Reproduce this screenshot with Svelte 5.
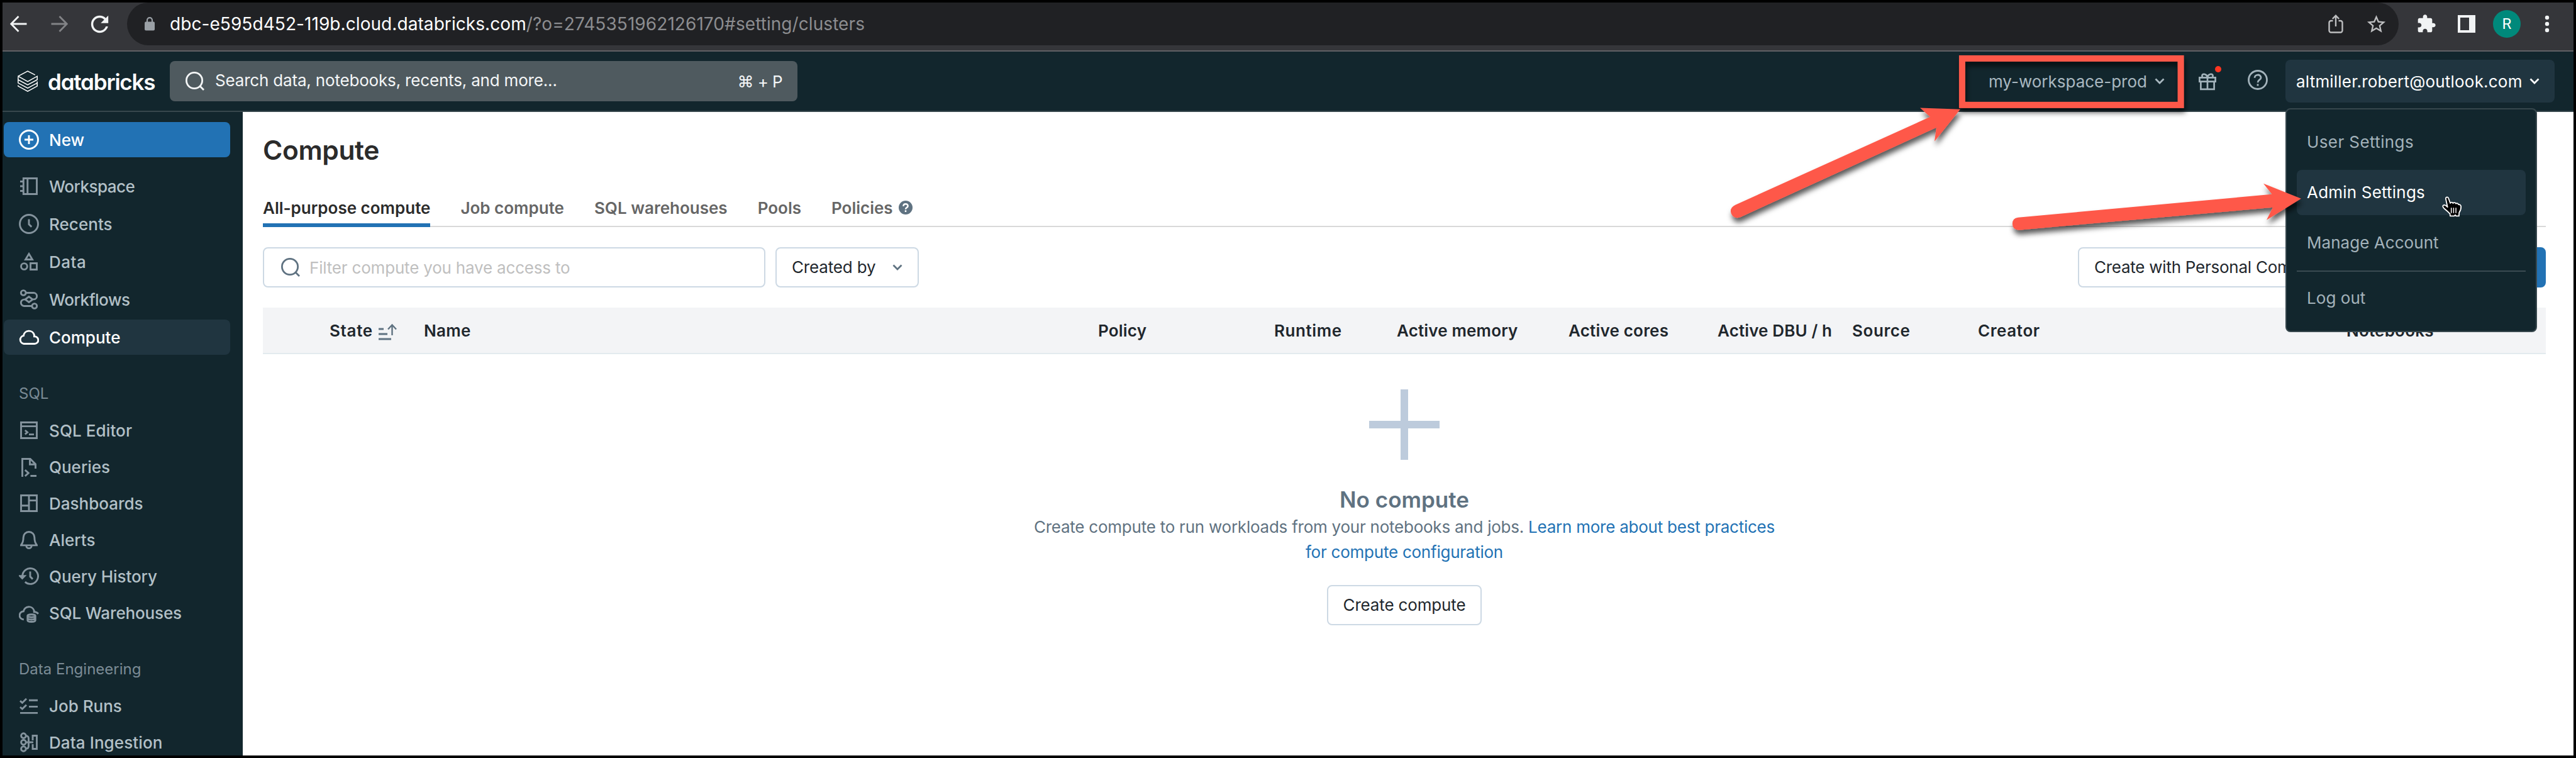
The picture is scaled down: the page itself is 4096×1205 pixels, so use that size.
<script>
  const primary = [
    { label: 'Workspace', icon: 'notebook', ls: -0.5 },
    { label: 'Recents', icon: 'clock', ls: 0.05 },
    { label: 'Data', icon: 'shapes', ls: 0.5 },
    { label: 'Workflows', icon: 'workflows', ls: -0.46 },
    { label: 'Compute', icon: 'cloud', ls: 0, active: true }
  ];
  const sections = [
    {
      title: 'SQL',
      items: [
        { label: 'SQL Editor', icon: 'editor', ls: 0.1 },
        { label: 'Queries', icon: 'query', ls: 0 },
        { label: 'Dashboards', icon: 'dashboard', ls: 0 },
        { label: 'Alerts', icon: 'bell', ls: 0 },
        { label: 'Query History', icon: 'history', ls: -0.08 },
        { label: 'SQL Warehouses', icon: 'warehouse', ls: -0.15 }
      ]
    },
    {
      title: 'Data Engineering',
      items: [
        { label: 'Job Runs', icon: 'jobs', ls: 0 },
        { label: 'Data Ingestion', icon: 'ingestion', ls: 0.1 }
      ]
    }
  ];
  const icons = {
    notebook: 'M3.65 1.75h10.6v12.5H3.65zM6.9 1.75v12.5M1 4.25h2.65M1 8h2.65M1 11.75h2.65',
    clock: 'M8 .75a7.25 7.25 0 1 1 0 14.5A7.25 7.25 0 0 1 8 .75zM8 4.2v4.1l2.1 2',
    shapes: 'M8 1.8l2.7 4.450H5.300zM4.200 9.300a2.450 2.450 0 1 1 0 4.900a2.450 2.450 0 0 1 0-4.900zM9.250 9.250h5v5h-5z',
    workflows:
      'M3.600.8a1.950 1.950 0 1 1 0 3.900a1.950 1.950 0 0 1 0-3.900zM12.400 11.300a1.950 1.950 0 1 1 0 3.900a1.950 1.950 0 0 1 0-3.900zM5.600 2.750h5.900a2.600 2.600 0 0 1 .4 5.200H11M8 5.800l3 2.200-3 2.200L5 8zM5 8.050h-.9a2.600 2.600 0 0 0 .3 5.200h6',
    cloud:
      'M3.900 13.250A3.250 3.250 0 0 1 3.700 6.850 4.350 4.350 0 0 1 12.200 6.200v1.250h.3a2.900 2.900 0 0 1 0 5.800z',
    editor: 'M1.750 1.750h12.500v12.500H1.750zM1.750 4.800h12.500M4.900 8l1.900 1.600-1.900 1.600M8 11.300h4',
    query: 'M2.750 16V1.750h6.300l4.200 4.200V9.500M8.750 1.750V6.100h4.500M4.900 10.600l2.700 2.400-2.700 2.400M9.200 15.250H14',
    dashboard: 'M1.750 1.750h12.500v12.500H1.750zM8 1.750v12.500M1.750 9.900H8M8 5.800h6.250',
    bell: 'M8 1.750a4.400 4.400 0 0 0-4.400 4.400c0 2.900-.5 4.400-1.850 6.100v.2h12.500v-.2c-1.350-1.700-1.850-3.200-1.850-6.100A4.400 4.400 0 0 0 8 1.750zM5.900 12.700a2.100 2.100 0 0 0 4.200 0',
    history: 'M2.850 8A6.200 6.200 0 1 1 4.900 12.600M.9 7.900l1.800 1.800 1.800-1.800zM9 4.200v4.100l2 2',
    warehouse:
      'M3.900 13.400A3.250 3.250 0 0 1 3.700 6.900 4.350 4.350 0 0 1 12.100 6.300v1.100c1.600 0 2.700.7 3.300 1.500M6.900 10.500c0-1.500 6.200-1.500 6.200 0s-6.200 1.500-6.200 0v3.500c0 1.700 6.200 1.700 6.200 0v-3.500M6.900 12.300c0 1.600 6.200 1.600 6.200 0',
    jobs: 'M1 4.100l1.700 1.500L6 2.400M1 9l1.700 1.500L6 7.300M8 3.600h7M8 8.700h7M1 13.700h14',
    ingestion:
      'M3.700.9a1.900 1.900 0 1 1 0 3.800a1.900 1.900 0 0 1 0-3.800zM3.700 6.100a1.900 1.900 0 1 1 0 3.800a1.900 1.900 0 0 1 0-3.800zM3.700 11.300a1.900 1.900 0 1 1 0 3.800a1.900 1.900 0 0 1 0-3.800zM5.600 2.800c1.500.1 2.150.9 2.150 2.200v6c0 1.300-.65 2.100-2.150 2.200M5.600 8h5.900M11 6.500V2.750h3.250v10.500H11V9.500'
  };
  const columns = [
    ['', 0], ['State', 0.7], ['Name', 0.3], ['Policy', 0.2], ['Runtime', 0.6], ['Active memory', 0.16],
    ['Active cores', 0.2], ['Active DBU / h', 0.13], ['Source', 0.6], ['Creator', 0.6], ['Notebooks', 0.2]
  ];
  const tabs = ['All-purpose compute', 'Job compute', 'SQL warehouses', 'Pools'];
</script>

{#snippet navItem(item)}
  <a class="item" class:active={item.active} href="#setting">
    <svg class="ico" viewBox="0 0 16 16"><path d={icons[item.icon]} /></svg>
    <span style:letter-spacing="{item.ls}px">{item.label}</span>
  </a>
{/snippet}

{#snippet chevron()}
  <svg class="chev" viewBox="0 0 16 10"><path d="M1.500 1.500 8 8l6.500-6.500" /></svg>
{/snippet}

{#snippet magnifier()}
  <svg class="mag" viewBox="0 0 32 32"><circle cx="15" cy="15" r="12.600" /><path d="M23.500 23.500 30 30" /></svg>
{/snippet}

<div class="window">
  <div class="browser">
    <div class="cell first">
      <svg width="28" height="28" viewBox="0 0 28 28" class="nav"><path d="M26.500 14H2.500M13.500 2 1.800 14l11.700 12" /></svg>
    </div>
    <div class="cell">
      <svg width="28" height="28" viewBox="0 0 28 28" class="nav dim"><path d="M1.500 14h24M14.500 2l11.700 12-11.700 12" /></svg>
    </div>
    <div class="cell">
      <svg width="41" height="41" viewBox="0 0 24 24" fill="#f1f3f4"><path d="M17.650 6.350C16.200 4.900 14.210 4 12 4c-4.420 0-7.990 3.580-7.990 8s3.570 8 7.990 8c3.730 0 6.840-2.550 7.730-6h-2.080c-.82 2.330-3.040 4-5.650 4-3.310 0-6-2.690-6-6s2.690-6 6-6c1.660 0 3.140.69 4.220 1.780L13 11h7V4l-2.350 2.350z" /></svg>
    </div>
    <div class="omnibox">
      <svg width="16" height="22" viewBox="0 0 16 22" class="lock"><rect y="7.500" width="16" height="14" rx="2" fill="#9aa0a6" /><path d="M4 8V5.200a4 4 0 0 1 8 0V8" fill="none" stroke="#9aa0a6" stroke-width="2.200" /></svg>
      <span class="url"><b>dbc-e595d452-119b.cloud.databricks.com</b><i>/?o=2745351962126170#setting/clusters</i></span>
      <div class="cell push">
        <svg width="24" height="32" viewBox="0 0 24 32" fill="none" stroke="#bdbec0" stroke-width="2.400"><path d="M7.500 11H4.500a3 3 0 0 0-3 3v12.500a3 3 0 0 0 3 3h15a3 3 0 0 0 3-3V14a3 3 0 0 0-3-3h-3M12 20V3.500M6.800 8 12 2.800 17.200 8" /></svg>
      </div>
      <div class="cell">
        <svg width="35" height="35" viewBox="0 0 24 24" fill="#bdbec0"><path d="M22 9.240l-7.190-.62L12 2 9.190 8.630 2 9.240l5.460 4.730L5.820 21 12 17.270 18.180 21l-1.630-7.030L22 9.240zM12 15.400l-3.760 2.270 1-4.280-3.320-2.880 4.380-.38L12 6.100l1.710 4.040 4.380.38-3.320 2.880 1 4.280L12 15.400z" /></svg>
      </div>
    </div>
    <div class="cell">
      <svg width="32" height="32" viewBox="0 0 24 24" fill="#f1f3f4"><path d="M20.500 11H19V7c0-1.100-.9-2-2-2h-4V3.500C13 2.120 11.880 1 10.500 1S8 2.120 8 3.500V5H4c-1.100 0-1.990.9-1.990 2v3.800H3.500c1.490 0 2.700 1.210 2.700 2.700s-1.210 2.700-2.700 2.700H2V20c0 1.100.9 2 2 2h3.800v-1.500c0-1.490 1.210-2.700 2.700-2.700 1.490 0 2.700 1.210 2.700 2.700V22H17c1.100 0 2-.9 2-2v-4h1.500c1.380 0 2.500-1.120 2.500-2.500S21.880 11 20.500 11z" /></svg>
    </div>
    <div class="cell">
      <svg width="28" height="28" viewBox="0 0 28 28" fill="#f1f3f4"><path fill-rule="evenodd" d="M0 0h28v28H0zM4 4v20h14V4z" /></svg>
    </div>
    <div class="cell"><div class="avatar">R</div></div>
    <div class="cell">
      <svg width="8" height="28" viewBox="0 0 8 28" fill="#f1f3f4"><circle cx="4" cy="4" r="3.200" /><circle cx="4" cy="14" r="3.200" /><circle cx="4" cy="24" r="3.200" /></svg>
    </div>
  </div>

  <header class="topbar">
    <svg class="logo" viewBox="0 0 32 34"><path d="M27.800 7.200 16 1 .8 9.200 16 17.600 31.200 9.200v5.500L16 23 .8 14.700v-4.500M.8 14.700v5.200L16 28.200l15.200-8.300M31.200 17.500v7.400L16 33.200.8 24.900v-1.500" /></svg>
    <span class="brand">databricks</span>
    <div class="search">
      {@render magnifier()}
      <span class="hint">Search data, notebooks, recents, and more...</span>
      <span class="keys">⌘ + P</span>
    </div>
    <div class="workspace">
      <span>my-workspace-prod</span>
      {@render chevron()}
    </div>
    <div class="gift">
      <svg width="32" height="32" viewBox="0 0 32 32" fill="none" stroke="#a3b3bb" stroke-width="2.700"><path d="M3.400 10.400h25.200v6.200H3.400zM5.400 16.600h21.200v12.200H5.400zM16 10v18.800M16 10c-1-5.500-8.500-7-8.600-2.500 0 1.200.4 2 1.200 2.900M16 10c1-5.500 8.500-7 8.600-2.500 0 1.200-.4 2-1.200 2.900" /></svg>
      <span class="dot"></span>
    </div>
    <svg class="help" width="32" height="32" viewBox="0 0 32 32" fill="none" stroke="#a3b3bb" stroke-width="2.800"><circle cx="16" cy="16" r="14.500" /><path d="M11 12.800c0-6.400 10-6.200 10-.4 0 3.600-5 3.600-5 7.800M16 22.500v3" /></svg>
    <div class="account">
      <span>altmiller.robert@outlook.com</span>
      {@render chevron()}
      <div class="menu">
        <a href="#user" style:letter-spacing="0.4px">User Settings</a>
        <a href="#admin" class="hover">Admin Settings</a>
        <a href="#manage">Manage Account</a>
        <hr />
        <a href="#logout">Log out</a>
      </div>
    </div>
  </header>

  <div class="body">
    <nav class="sidebar">
      <a class="item new" href="#new">
        <svg class="ico" viewBox="0 0 16 16"><path d="M8 .75a7.250 7.250 0 1 1 0 14.500A7.250 7.250 0 0 1 8 .75zM8 4.500v7M4.500 8h7" /></svg>
        <span>New</span>
      </a>
      <div class="group primary">
        {#each primary as item}{@render navItem(item)}{/each}
      </div>
      {#each sections as section}
        <h2>{section.title}</h2>
        <div class="group">
          {#each section.items as item}{@render navItem(item)}{/each}
        </div>
      {/each}
    </nav>

    <main>
      <h1>Compute</h1>
      <div class="tabs">
        {#each tabs as tab, i}
          <span class="tab" class:current={i === 0}>{tab}</span>
        {/each}
        <span class="tab">Policies
          <svg width="22" height="22" viewBox="0 0 22 22"><circle cx="11" cy="11" r="11" fill="#5f7281" /><path d="M7.400 8.700c0-4.800 7.200-4.600 7.200-.3 0 2.700-3.600 2.700-3.600 5.300M11 15.300v2.700" fill="none" stroke="#fff" stroke-width="2.500" /></svg>
        </span>
      </div>

      <div class="filters">
        <div class="input">
          {@render magnifier()}
          <span>Filter compute you have access to</span>
        </div>
        <button class="btn created">Created by {@render chevron()}</button>
        <button class="btn personal">Create with Personal Compute</button>
        <button class="btn solid">Create compute</button>
      </div>

      <div class="thead">
        {#each columns as [label, ls]}
          <span style:letter-spacing="{ls}px">{label}{#if label === 'State'}<svg class="sort" width="30" height="28" viewBox="0 0 30 28"><path d="M0 9h8M0 17h14M0 25h20" /><path class="thin" d="M21.500 19V2.500M15 9.500l6.500-7 6.500 7" /></svg>{/if}</span>
        {/each}
      </div>

      <div class="empty">
        <svg width="112" height="112" viewBox="0 0 112 112"><path d="M50 0h12v50h50v12H62v50H50V62H0V50h50z" fill="#bdcbdc" /></svg>
        <h3>No compute</h3>
        <p>Create compute to run workloads from your notebooks and jobs. <a href="#learn">Learn more about best practices<br />for compute configuration</a></p>
        <button class="btn">Create compute</button>
      </div>
    </main>
  </div>

  <svg class="marks" viewBox="0 0 4100 1206" preserveAspectRatio="none">
    <defs>
      <filter id="shade" x="-10%" y="-20%" width="120%" height="150%">
        <feDropShadow dx="2" dy="7" stdDeviation="4" flood-color="#000" flood-opacity="0.65" />
      </filter>
    </defs>
    <g filter="url(#shade)">
      <rect x="3123" y="93" width="348" height="74" fill="none" stroke="#fe594a" stroke-width="10" />
    </g>
    <g filter="url(#shade)" fill="#fe594a">
      <path d="M2762 326 3072 186 3056 171.700 3120 174 3079 225 3082 203 2770 345.500Q2760 349 2755.500 340 2752 331 2762 326z" />
      <path d="M3212 346 3616 309 3602.500 292 3662.500 316 3607.500 350 3617.500 330 3213 366Q3203 365 3203 356 3203 347 3212 346z" />
    </g>
    <g transform="translate(3886.500 312.500)">
      <path d="M6.200 3.800C5.600.8 9.600.3 10.600 3L13.400 10.800c.8-2 3.600-1.800 4.400 0 1.200-1.600 4-1.200 4.600.7 1.300-1.100 3.600-.5 4.200 1.500 1.800-.5 3.800.7 3.900 3.400.1 4-.9 6.600-3 9.500l-.3 5.300h-4.600l-1.200-1.700-1.700 1.700h-6.500l-.3-3.500C10.500 25 8 22.700 4.600 20 1.500 17.500.8 15.200 2.200 14.200c1.800-1.200 4.200 0 6.800 2.800z" fill="#000" stroke="#fff" stroke-width="1.800" stroke-linejoin="round" />
      <path d="M15 18v8.500M18.700 18v8.500M22.400 18v8.500" stroke="#fff" stroke-width="1.500" />
    </g>
  </svg>
</div>

<style>
  :global(body) {
    background: #000;
    overflow: hidden;
  }
  .window {
    position: relative;
    box-sizing: border-box;
    width: 4096px;
    height: 1205px;
    border: 4px solid #000;
    overflow: hidden;
    display: flex;
    flex-direction: column;
    font-family: Inter, 'Liberation Sans', sans-serif;
    font-size: 26px;
    white-space: nowrap;
  }
  svg {
    display: block;
    flex: none;
  }
  a {
    color: inherit;
    text-decoration: none;
  }

  .browser {
    flex: none;
    box-sizing: border-box;
    height: 78px;
    padding: 0 10px 8px 0;
    border-bottom: 2px solid #606165;
    background: #35363a;
    display: flex;
    align-items: center;
  }
  .cell {
    flex: none;
    width: 64px;
    display: flex;
    align-items: center;
    justify-content: center;
  }
  .cell.first {
    width: 52px;
    margin-right: 6px;
  }
  .nav {
    fill: none;
    stroke: #f1f3f4;
    stroke-width: 2.8;
  }
  .nav.dim {
    stroke: #828386;
  }
  .omnibox {
    flex: 1;
    box-sizing: border-box;
    height: 68px;
    margin: 0 12px;
    padding: 0 4px 0 28px;
    border-radius: 34px;
    background: #202124;
    display: flex;
    align-items: center;
  }
  .url {
    margin-left: 24px;
    font-size: 28px;
    letter-spacing: 0.07px;
  }
  .url b {
    font-weight: 400;
    color: #fff;
  }
  .url i {
    font-style: normal;
    color: #8c8d90;
  }
  .push {
    margin-left: auto;
  }
  .avatar {
    width: 44px;
    height: 44px;
    border-radius: 50%;
    background: #00897b;
    color: #fff;
    font: 24px/44px Roboto, sans-serif;
    text-align: center;
  }

  .topbar {
    flex: none;
    box-sizing: border-box;
    height: 96px;
    padding: 0 30px 0 24px;
    border-bottom: 2px solid #37474d;
    background: #12262d;
    color: #a9b8c0;
    display: flex;
    align-items: center;
  }
  .logo {
    width: 32px;
    height: 34px;
    fill: none;
    stroke: #fff;
    stroke-width: 1.5;
  }
  .brand {
    width: 194px;
    padding-top: 2px;
    margin-left: 16px;
    font-size: 35px;
    font-weight: 600;
    letter-spacing: -1.2px;
    color: #fff;
    font-feature-settings: 'cv11';
  }
  .search {
    box-sizing: border-box;
    width: 998px;
    height: 64px;
    padding: 0 24px;
    border-radius: 8px;
    background: #4f5a5f;
    color: #f4f6f7;
    display: flex;
    align-items: center;
  }
  .mag {
    width: 32px;
    height: 32px;
    fill: none;
    stroke: currentColor;
    stroke-width: 2.8;
  }
  .hint {
    margin-left: 16px;
    padding-bottom: 3px;
    letter-spacing: -0.18px;
  }
  .keys {
    margin-left: auto;
    letter-spacing: -0.6px;
  }
  .workspace {
    margin-left: auto;
    margin-right: 52px;
    display: flex;
    align-items: center;
    gap: 12px;
  }
  .chev {
    width: 16px;
    height: 10px;
    fill: none;
    stroke: currentColor;
    stroke-width: 2.8;
  }
  .gift {
    position: relative;
    margin-right: 48px;
  }
  .dot {
    position: absolute;
    right: -6px;
    top: -8px;
    width: 10px;
    height: 10px;
    border-radius: 50%;
    background: #ff3621;
  }
  .help {
    margin-right: 28px;
    margin-top: -4px;
  }
  .account {
    position: relative;
    box-sizing: border-box;
    width: 428px;
    height: 68px;
    padding: 0 24px 0 17px;
    border-radius: 8px;
    background: #203540;
    color: #fff;
    display: flex;
    align-items: center;
    justify-content: space-between;
    letter-spacing: 0.2px;
  }
  .menu {
    position: absolute;
    z-index: 2;
    left: 0;
    top: 77px;
    box-sizing: border-box;
    width: 400px;
    padding: 16px;
    border: 2px solid #37474d;
    border-radius: 8px;
    background: #12262d;
    color: #a3b2ba;
    display: flex;
    flex-direction: column;
    gap: 8px;
    letter-spacing: 0.05px;
  }
  .menu a {
    height: 72px;
    line-height: 72px;
    padding-left: 16px;
    border-radius: 8px;
  }
  .menu .hover {
    background: #203540;
    color: #fff;
    letter-spacing: 0.2px;
  }
  .menu hr {
    width: 100%;
    height: 2px;
    margin: 0 0 -2px;
    border: 0;
    background: #3a4a51;
  }

  .body {
    flex: 1;
    min-height: 0;
    display: flex;
  }
  .sidebar {
    flex: none;
    box-sizing: border-box;
    width: 382px;
    padding: 16px 20px 0 2px;
    background: #12262d;
    color: #b2c0c7;
    font-weight: 500;
    overflow: hidden;
  }
  .group {
    display: flex;
    flex-direction: column;
    gap: 2px;
  }
  .primary {
    gap: 4px;
    padding-top: 18px;
  }
  .item {
    flex: none;
    height: 56px;
    padding-left: 24px;
    border-radius: 8px;
    display: flex;
    align-items: center;
    gap: 16px;
  }
  .item.new {
    background: #2272b4;
    color: #fff;
  }
  .item.active {
    background: #203540;
    color: #fff;
  }
  .ico {
    width: 32px;
    height: 32px;
    fill: none;
    stroke: #84939d;
    stroke-width: 1.45;
  }
  .new .ico,
  .active .ico {
    stroke: #fff;
  }
  h2 {
    box-sizing: border-box;
    height: 92px;
    margin: 0;
    padding: 32px 0 0 24px;
    font-size: 24px;
    line-height: 60px;
    font-weight: 400;
    color: #7b8b95;
  }

  main {
    flex: 1;
    min-width: 0;
    padding: 36px 44px 0 32px;
    background: #fff;
  }
  h1 {
    margin: 0;
    font-size: 42.5px;
    line-height: 50px;
    font-weight: 600;
    letter-spacing: -0.4px;
    color: #2b2b2b;
  }
  .tabs {
    height: 62px;
    margin-top: 35px;
    display: flex;
    gap: 48px;
    box-shadow: inset 0 -2px #d9d9d9;
  }
  .tab {
    height: 62px;
    line-height: 61px;
    font-weight: 600;
    color: #666;
    display: flex;
    align-items: center;
    gap: 9px;
  }
  .tab.current {
    color: #2b2b2b;
    box-shadow: inset 0 -6px #2272b4;
  }
  .filters {
    height: 64px;
    margin-top: 32px;
    display: flex;
  }
  .input {
    box-sizing: border-box;
    width: 799px;
    padding: 0 26px;
    border: 2px solid #cdd9e4;
    border-radius: 8px;
    color: #5f7281;
    display: flex;
    align-items: center;
    gap: 14px;
    letter-spacing: -0.19px;
  }
  .input span {
    color: #bfbfbf;
  }
  .btn {
    box-sizing: border-box;
    height: 64px;
    padding: 0 24px;
    border: 2px solid #cdd9e4;
    border-radius: 8px;
    background: #fff;
    color: #1f272d;
    font: 26px/60px Inter, sans-serif;
    letter-spacing: -0.15px;
    white-space: nowrap;
  }
  .created {
    width: 228px;
    margin-left: 16px;
    display: flex;
    align-items: center;
    justify-content: space-between;
  }
  .created .chev {
    stroke: #5f7281;
  }
  .personal {
    width: 410px;
    margin-left: auto;
    text-align: left;
    letter-spacing: -0.25px;
  }
  .solid {
    width: 318px;
    margin-left: 16px;
    border-color: #2272b4;
    background: #2272b4;
    color: #fff;
  }
  .thead {
    height: 72px;
    margin-top: 32px;
    padding-left: 106px;
    border-bottom: 2px solid #e3eaee;
    background: #f3f4f6;
    color: #1f272d;
    font-weight: 600;
    display: grid;
    grid-template-columns: 0 150px 1072px 280px 195px 273px 237px 214px 200px 586px 1fr;
    align-items: center;
  }
  .thead span {
    display: flex;
    align-items: center;
  }
  .sort {
    margin: 5px 0 0 9px;
    fill: none;
    stroke: #5f7281;
    stroke-width: 3;
  }
  .thin {
    stroke-width: 2.4;
  }
  .empty {
    padding-top: 56px;
    display: flex;
    flex-direction: column;
    align-items: center;
    text-align: center;
    color: #5f7281;
  }
  h3 {
    margin: 40px 0 0;
    font-size: 35px;
    line-height: 47px;
    font-weight: 600;
  }
  p {
    margin: 0 0 32px;
    line-height: 40px;
    letter-spacing: -0.24px;
  }
  p a {
    color: #2272b4;
  }
  .marks {
    position: absolute;
    z-index: 3;
    left: -4px;
    top: -4px;
    width: 4096px;
    height: 1205px;
    pointer-events: none;
  }
</style>
